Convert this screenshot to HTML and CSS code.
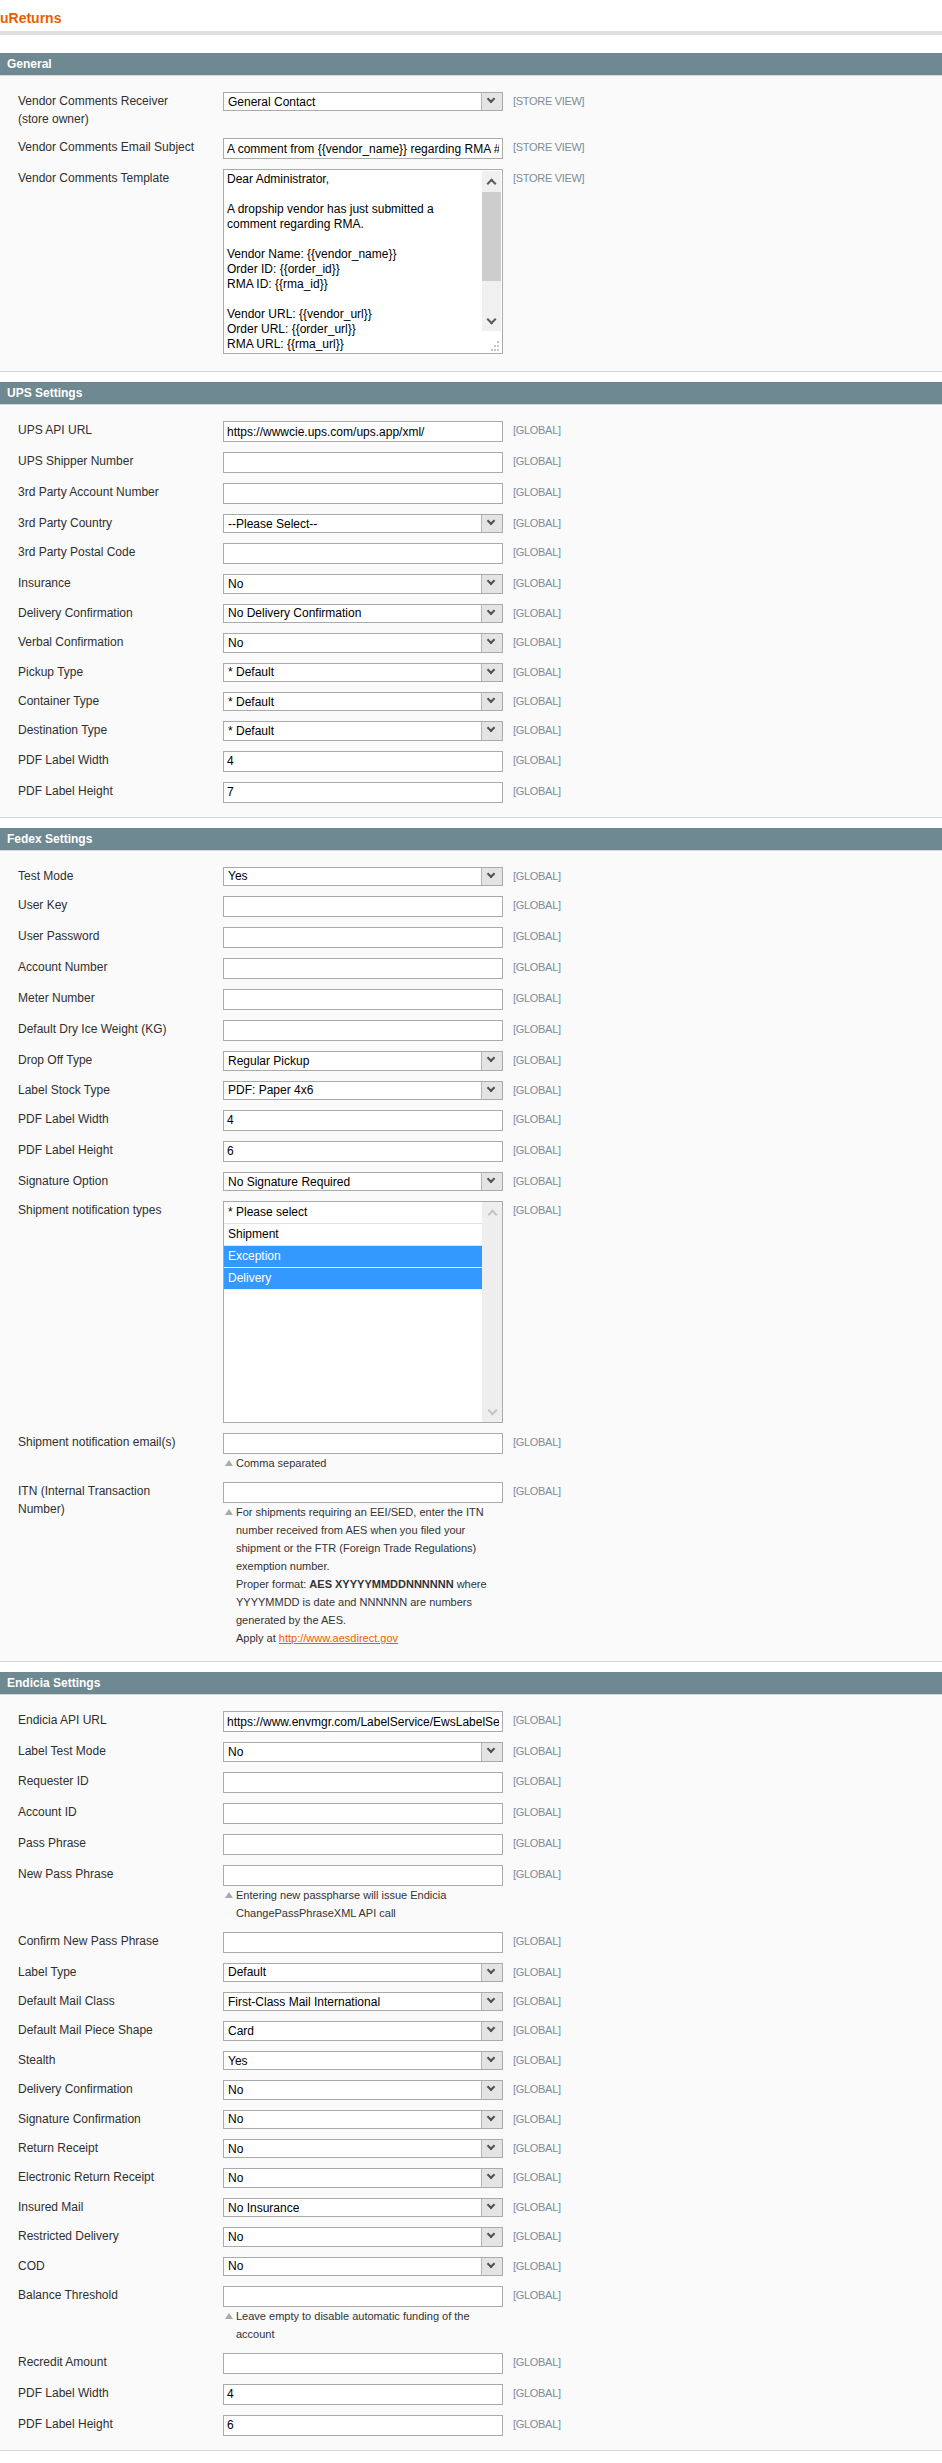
FILE: index.html
```html
<!DOCTYPE html>
<html lang="en">
<head>
<meta charset="UTF-8">
<title>uReturns</title>
<link rel="stylesheet" href="styles.css">
</head>
<body>
    <div class="page-head">
        <h3>uReturns</h3>
    </div>

    <!-- General -->
    <div class="section-head"><h4>General</h4></div>
    <div class="fieldset">
        <div class="row">
            <label class="label">Vendor Comments Receiver (store owner)</label>
            <div class="value"><div class="select"><select><option>General Contact</option></select></div></div>
            <span class="scope">[STORE VIEW]</span>
        </div>
        <div class="row">
            <label class="label">Vendor Comments Email Subject</label>
            <div class="value"><input class="input-text" type="text" value="A comment from {{vendor_name}} regarding RMA #{{rma_increment_id}}"></div>
            <span class="scope">[STORE VIEW]</span>
        </div>
        <div class="row">
            <label class="label">Vendor Comments Template</label>
            <div class="value">
                <div class="textarea-box">
                    <textarea>Dear Administrator,

A dropship vendor has just submitted a comment regarding RMA.

Vendor Name: {{vendor_name}}
Order ID: {{order_id}}
RMA ID: {{rma_id}}

Vendor URL: {{vendor_url}}
Order URL: {{order_url}}
RMA URL: {{rma_url}}</textarea>
                    <div class="scrollbar">
                        <div class="sb-btn"><span class="chev up"></span></div>
                        <div class="sb-track"><div class="sb-thumb"></div></div>
                        <div class="sb-btn"><span class="chev down"></span></div>
                        <div class="sb-corner">
                            <svg width="10" height="10" viewBox="0 0 10 10"><rect x="7" y="0" width="2" height="2"/><rect x="4" y="4" width="2" height="2"/><rect x="7" y="4" width="2" height="2"/><rect x="1" y="8" width="2" height="2"/><rect x="4" y="8" width="2" height="2"/><rect x="7" y="8" width="2" height="2"/></svg>
                        </div>
                    </div>
                </div>
            </div>
            <span class="scope">[STORE VIEW]</span>
        </div>
    </div>

    <!-- UPS -->
    <div class="section-head"><h4>UPS Settings</h4></div>
    <div class="fieldset">
        <div class="row">
            <label class="label">UPS API URL</label>
            <div class="value"><input class="input-text" type="text" value="https://wwwcie.ups.com/ups.app/xml/"></div>
            <span class="scope">[GLOBAL]</span>
        </div>
        <div class="row">
            <label class="label">UPS Shipper Number</label>
            <div class="value"><input class="input-text" type="text"></div>
            <span class="scope">[GLOBAL]</span>
        </div>
        <div class="row">
            <label class="label">3rd Party Account Number</label>
            <div class="value"><input class="input-text" type="text"></div>
            <span class="scope">[GLOBAL]</span>
        </div>
        <div class="row">
            <label class="label">3rd Party Country</label>
            <div class="value"><div class="select"><select><option>--Please Select--</option></select></div></div>
            <span class="scope">[GLOBAL]</span>
        </div>
        <div class="row">
            <label class="label">3rd Party Postal Code</label>
            <div class="value"><input class="input-text" type="text"></div>
            <span class="scope">[GLOBAL]</span>
        </div>
        <div class="row">
            <label class="label">Insurance</label>
            <div class="value"><div class="select"><select><option>No</option></select></div></div>
            <span class="scope">[GLOBAL]</span>
        </div>
        <div class="row">
            <label class="label">Delivery Confirmation</label>
            <div class="value"><div class="select"><select><option>No Delivery Confirmation</option></select></div></div>
            <span class="scope">[GLOBAL]</span>
        </div>
        <div class="row">
            <label class="label">Verbal Confirmation</label>
            <div class="value"><div class="select"><select><option>No</option></select></div></div>
            <span class="scope">[GLOBAL]</span>
        </div>
        <div class="row">
            <label class="label">Pickup Type</label>
            <div class="value"><div class="select"><select><option>* Default</option></select></div></div>
            <span class="scope">[GLOBAL]</span>
        </div>
        <div class="row">
            <label class="label">Container Type</label>
            <div class="value"><div class="select"><select><option>* Default</option></select></div></div>
            <span class="scope">[GLOBAL]</span>
        </div>
        <div class="row">
            <label class="label">Destination Type</label>
            <div class="value"><div class="select"><select><option>* Default</option></select></div></div>
            <span class="scope">[GLOBAL]</span>
        </div>
        <div class="row">
            <label class="label">PDF Label Width</label>
            <div class="value"><input class="input-text" type="text" value="4"></div>
            <span class="scope">[GLOBAL]</span>
        </div>
        <div class="row">
            <label class="label">PDF Label Height</label>
            <div class="value"><input class="input-text" type="text" value="7"></div>
            <span class="scope">[GLOBAL]</span>
        </div>
    </div>

    <!-- Fedex -->
    <div class="section-head"><h4>Fedex Settings</h4></div>
    <div class="fieldset">
        <div class="row">
            <label class="label">Test Mode</label>
            <div class="value"><div class="select"><select><option>Yes</option></select></div></div>
            <span class="scope">[GLOBAL]</span>
        </div>
        <div class="row">
            <label class="label">User Key</label>
            <div class="value"><input class="input-text" type="text"></div>
            <span class="scope">[GLOBAL]</span>
        </div>
        <div class="row">
            <label class="label">User Password</label>
            <div class="value"><input class="input-text" type="text"></div>
            <span class="scope">[GLOBAL]</span>
        </div>
        <div class="row">
            <label class="label">Account Number</label>
            <div class="value"><input class="input-text" type="text"></div>
            <span class="scope">[GLOBAL]</span>
        </div>
        <div class="row">
            <label class="label">Meter Number</label>
            <div class="value"><input class="input-text" type="text"></div>
            <span class="scope">[GLOBAL]</span>
        </div>
        <div class="row">
            <label class="label">Default Dry Ice Weight (KG)</label>
            <div class="value"><input class="input-text" type="text"></div>
            <span class="scope">[GLOBAL]</span>
        </div>
        <div class="row">
            <label class="label">Drop Off Type</label>
            <div class="value"><div class="select"><select><option>Regular Pickup</option></select></div></div>
            <span class="scope">[GLOBAL]</span>
        </div>
        <div class="row">
            <label class="label">Label Stock Type</label>
            <div class="value"><div class="select"><select><option>PDF: Paper 4x6</option></select></div></div>
            <span class="scope">[GLOBAL]</span>
        </div>
        <div class="row">
            <label class="label">PDF Label Width</label>
            <div class="value"><input class="input-text" type="text" value="4"></div>
            <span class="scope">[GLOBAL]</span>
        </div>
        <div class="row">
            <label class="label">PDF Label Height</label>
            <div class="value"><input class="input-text" type="text" value="6"></div>
            <span class="scope">[GLOBAL]</span>
        </div>
        <div class="row">
            <label class="label">Signature Option</label>
            <div class="value"><div class="select"><select><option>No Signature Required</option></select></div></div>
            <span class="scope">[GLOBAL]</span>
        </div>
        <div class="row">
            <label class="label">Shipment notification types</label>
            <div class="value">
                <div class="multiselect">
                    <ul class="options">
                        <li>* Please select</li>
                        <li>Shipment</li>
                        <li class="selected">Exception</li>
                        <li class="selected">Delivery</li>
                    </ul>
                    <div class="scrollbar disabled">
                        <div class="sb-btn"><span class="chev up"></span></div>
                        <div class="sb-track"></div>
                        <div class="sb-btn"><span class="chev down"></span></div>
                    </div>
                </div>
            </div>
            <span class="scope">[GLOBAL]</span>
        </div>
        <div class="row">
            <label class="label">Shipment notification email(s)</label>
            <div class="value">
                <input class="input-text" type="text">
                <p class="note">Comma separated</p>
            </div>
            <span class="scope">[GLOBAL]</span>
        </div>
        <div class="row">
            <label class="label">ITN (Internal Transaction Number)</label>
            <div class="value">
                <input class="input-text" type="text">
                <p class="note">For shipments requiring an EEI/SED, enter the ITN number received from AES when you filed your shipment or the FTR (Foreign Trade Regulations) exemption number.<br>Proper format: <b>AES XYYYYMMDDNNNNNN</b> where YYYYMMDD is date and NNNNNN are numbers generated by the AES.<br>Apply at <a href="#">http://www.aesdirect.gov</a></p>
            </div>
            <span class="scope">[GLOBAL]</span>
        </div>
    </div>

    <!-- Endicia -->
    <div class="section-head"><h4>Endicia Settings</h4></div>
    <div class="fieldset">
        <div class="row">
            <label class="label">Endicia API URL</label>
            <div class="value"><input class="input-text" type="text" value="https://www.envmgr.com/LabelService/EwsLabelService.asmx"></div>
            <span class="scope">[GLOBAL]</span>
        </div>
        <div class="row">
            <label class="label">Label Test Mode</label>
            <div class="value"><div class="select"><select><option>No</option></select></div></div>
            <span class="scope">[GLOBAL]</span>
        </div>
        <div class="row">
            <label class="label">Requester ID</label>
            <div class="value"><input class="input-text" type="text"></div>
            <span class="scope">[GLOBAL]</span>
        </div>
        <div class="row">
            <label class="label">Account ID</label>
            <div class="value"><input class="input-text" type="text"></div>
            <span class="scope">[GLOBAL]</span>
        </div>
        <div class="row">
            <label class="label">Pass Phrase</label>
            <div class="value"><input class="input-text" type="text"></div>
            <span class="scope">[GLOBAL]</span>
        </div>
        <div class="row">
            <label class="label">New Pass Phrase</label>
            <div class="value">
                <input class="input-text" type="text">
                <p class="note">Entering new passpharse will issue Endicia ChangePassPhraseXML API call</p>
            </div>
            <span class="scope">[GLOBAL]</span>
        </div>
        <div class="row">
            <label class="label">Confirm New Pass Phrase</label>
            <div class="value"><input class="input-text" type="text"></div>
            <span class="scope">[GLOBAL]</span>
        </div>
        <div class="row">
            <label class="label">Label Type</label>
            <div class="value"><div class="select"><select><option>Default</option></select></div></div>
            <span class="scope">[GLOBAL]</span>
        </div>
        <div class="row">
            <label class="label">Default Mail Class</label>
            <div class="value"><div class="select"><select><option>First-Class Mail International</option></select></div></div>
            <span class="scope">[GLOBAL]</span>
        </div>
        <div class="row">
            <label class="label">Default Mail Piece Shape</label>
            <div class="value"><div class="select"><select><option>Card</option></select></div></div>
            <span class="scope">[GLOBAL]</span>
        </div>
        <div class="row">
            <label class="label">Stealth</label>
            <div class="value"><div class="select"><select><option>Yes</option></select></div></div>
            <span class="scope">[GLOBAL]</span>
        </div>
        <div class="row">
            <label class="label">Delivery Confirmation</label>
            <div class="value"><div class="select"><select><option>No</option></select></div></div>
            <span class="scope">[GLOBAL]</span>
        </div>
        <div class="row">
            <label class="label">Signature Confirmation</label>
            <div class="value"><div class="select"><select><option>No</option></select></div></div>
            <span class="scope">[GLOBAL]</span>
        </div>
        <div class="row">
            <label class="label">Return Receipt</label>
            <div class="value"><div class="select"><select><option>No</option></select></div></div>
            <span class="scope">[GLOBAL]</span>
        </div>
        <div class="row">
            <label class="label">Electronic Return Receipt</label>
            <div class="value"><div class="select"><select><option>No</option></select></div></div>
            <span class="scope">[GLOBAL]</span>
        </div>
        <div class="row">
            <label class="label">Insured Mail</label>
            <div class="value"><div class="select"><select><option>No Insurance</option></select></div></div>
            <span class="scope">[GLOBAL]</span>
        </div>
        <div class="row">
            <label class="label">Restricted Delivery</label>
            <div class="value"><div class="select"><select><option>No</option></select></div></div>
            <span class="scope">[GLOBAL]</span>
        </div>
        <div class="row">
            <label class="label">COD</label>
            <div class="value"><div class="select"><select><option>No</option></select></div></div>
            <span class="scope">[GLOBAL]</span>
        </div>
        <div class="row">
            <label class="label">Balance Threshold</label>
            <div class="value">
                <input class="input-text" type="text">
                <p class="note">Leave empty to disable automatic funding of the account</p>
            </div>
            <span class="scope">[GLOBAL]</span>
        </div>
        <div class="row">
            <label class="label">Recredit Amount</label>
            <div class="value"><input class="input-text" type="text"></div>
            <span class="scope">[GLOBAL]</span>
        </div>
        <div class="row">
            <label class="label">PDF Label Width</label>
            <div class="value"><input class="input-text" type="text" value="4"></div>
            <span class="scope">[GLOBAL]</span>
        </div>
        <div class="row">
            <label class="label">PDF Label Height</label>
            <div class="value"><input class="input-text" type="text" value="6"></div>
            <span class="scope">[GLOBAL]</span>
        </div>
    </div>
</body>
</html>
```

FILE: styles.css
```css
body {
    margin: 0;
    background: #fff;
    font: 12px/18px "Liberation Sans", Arial, sans-serif;
    color: #2f2f2f;
}
.page-head {
    padding: 9px 0 4px;
    border-bottom: 4px solid #dfdfdf;
    margin-bottom: 18px;
}
.page-head h3 {
    margin: 0;
    font-size: 14px;
    line-height: 18px;
    font-weight: bold;
    color: #eb5e00;
}
.section-head {
    background: #6f8992;
    padding: 2px 7px;
}
.section-head h4 {
    margin: 0;
    font-size: 12px;
    line-height: 18px;
    font-weight: bold;
    color: #fff;
}
.fieldset {
    background: #fafafa;
    border-top: 1px solid #d6d6d6;
    border-bottom: 1px solid #d6d6d6;
    padding: 11px 18px 9px;
    margin-bottom: 10px;
}
.row {
    display: flex;
    align-items: flex-start;
    padding: 5px 0;
}
.label {
    flex: none;
    width: 180px;
    margin-right: 25px;
}
.value {
    flex: none;
    width: 280px;
}
.scope {
    margin-left: 10px;
    font-size: 11px;
    letter-spacing: -0.3px;
    color: #7f8c99;
}
.input-text {
    display: block;
    width: 100%;
    height: 21px;
    margin: 0;
    padding: 0 3px;
    box-sizing: border-box;
    border: 1px solid #aaa;
    border-radius: 0;
    background: #fff;
    font: 12px "Liberation Sans", Arial, sans-serif;
    color: #000;
}

/* select with grey arrow box */
.select {
    position: relative;
    height: 19.4px;
}
.select select {
    -webkit-appearance: none;
    appearance: none;
    display: block;
    width: 100%;
    height: 100%;
    margin: 0;
    padding: 0 24px 0 4px;
    box-sizing: border-box;
    border: 1px solid #aaa;
    border-radius: 0;
    background: #fff;
    font: 12px "Liberation Sans", Arial, sans-serif;
    color: #000;
}
.select::after {
    content: "";
    position: absolute;
    top: 1px;
    right: 1px;
    bottom: 1px;
    width: 21px;
    box-sizing: border-box;
    background: #e4e4e4;
    border-left: 1px solid #b5b5b5;
}
.select::before {
    content: "";
    position: absolute;
    z-index: 1;
    top: 4px;
    right: 9px;
    width: 4px;
    height: 4px;
    border-right: 2px solid #505050;
    border-bottom: 2px solid #505050;
    transform: rotate(45deg);
}

/* textarea */
.textarea-box {
    display: flex;
    height: 185px;
    margin-bottom: 3px;
    box-sizing: border-box;
    border: 1px solid #aaa;
    background: #fff;
}
.textarea-box textarea {
    flex: 1;
    min-width: 0;
    margin: 0;
    padding: 2px 3px;
    border: 0;
    outline: none;
    resize: none;
    overflow: hidden;
    background: transparent;
    font: 12px/15px "Liberation Sans", Arial, sans-serif;
    color: #000;
}
.scrollbar {
    flex: none;
    width: 19px;
    margin: 1px 1px 0 0;
    display: flex;
    flex-direction: column;
}
.sb-btn {
    height: 20px;
    background: #f0f0f0;
    display: flex;
    align-items: center;
    justify-content: center;
}
.sb-track {
    flex: 1;
    background: #f0f0f0;
}
.sb-thumb {
    height: 89px;
    margin-top: 1px;
    background: #cdcdcd;
}
.sb-corner {
    height: 22px;
    display: flex;
    align-items: flex-end;
    justify-content: flex-end;
    padding: 0 1px 2px 0;
    box-sizing: border-box;
}
.sb-corner svg {
    fill: #c4c4c4;
}
.chev {
    width: 5px;
    height: 5px;
    border-right: 2px solid #5a5a5a;
    border-bottom: 2px solid #5a5a5a;
}
.chev.up {
    transform: translateY(2px) rotate(-135deg);
}
.chev.down {
    transform: translateY(-2px) rotate(45deg);
}

/* multiselect */
.multiselect {
    display: flex;
    height: 222px;
    box-sizing: border-box;
    border: 1px solid #aaa;
    background: #fff;
}
.options {
    flex: 1;
    margin: 0;
    padding: 0;
    list-style: none;
    font-size: 12px;
    color: #000;
}
.options li {
    height: 21px;
    line-height: 21px;
    padding-left: 4px;
    border-bottom: 1px solid #e2e2e2;
}
.options li.selected {
    background: #3399ff;
    color: #fff;
    border-bottom-color: #e8f0f8;
}
.scrollbar.disabled {
    width: 20px;
    margin: 0;
    background: #eee;
}
.scrollbar.disabled .sb-btn,
.scrollbar.disabled .sb-track {
    background: #eee;
}
.scrollbar.disabled .chev {
    border-color: #c3c3c3;
}

/* notes */
.note {
    position: relative;
    margin: 0;
    padding-left: 13px;
    font-size: 11px;
    line-height: 18px;
    color: #333;
}
.note::before {
    content: "";
    position: absolute;
    top: 6px;
    left: 2px;
    border-left: 4px solid transparent;
    border-right: 4px solid transparent;
    border-bottom: 6px solid #a9a9a9;
}
.note b {
    font-weight: bold;
}
.note a {
    color: #eb5e00;
    text-decoration: underline;
}
```
